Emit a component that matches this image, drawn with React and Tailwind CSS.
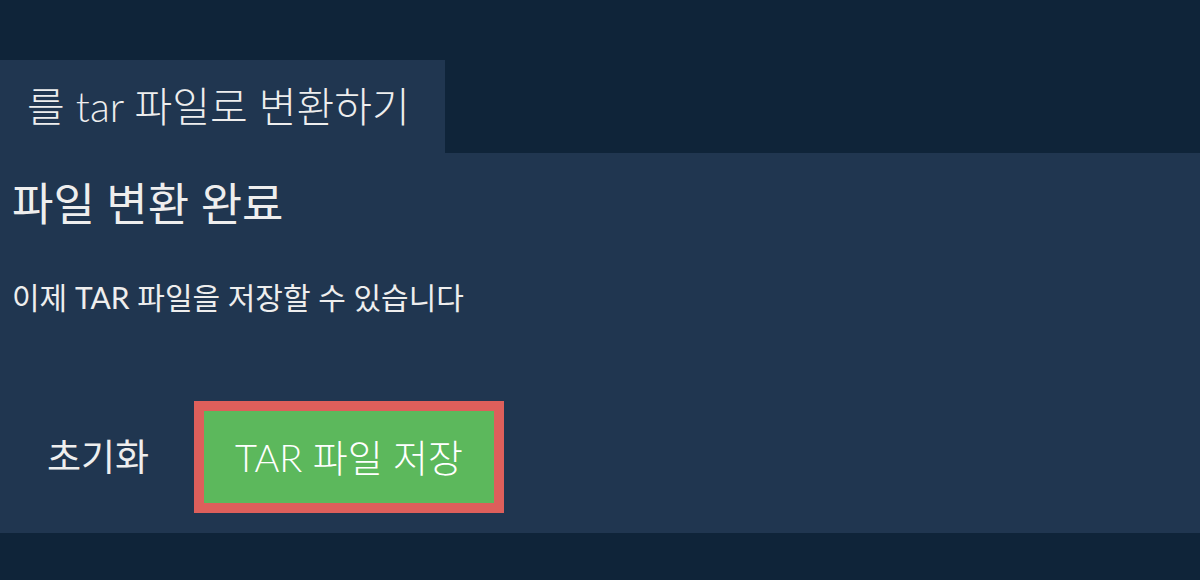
import React from 'react';

const font = { fontFamily: '"Lato", "Noto Sans CJK KR", sans-serif' };

export default function App() {
    return <div className="min-h-[580px] w-full bg-[#0f2439] pt-[60px] text-[#eeeeee]" style={font}>
        <div className="flex h-[93px] w-[445px] items-center bg-[#203650] pl-[27px]">
            <span className="text-[41px] font-light leading-[50px]">를 tar 파일로 변환하기</span>
        </div>
        <div className="h-[380px] bg-[#203650] px-3">
            <h2 className="pt-[23px] text-[45px] font-normal leading-[56px]">파일 변환 완료</h2>
            <p className="mt-[45px] text-[30px] leading-[40px]">이제 TAR 파일을 저장할 수 있습니다</p>
            <div className="mt-[84px] flex items-center">
                <button className="mr-[10px] w-[172px] text-[37px] leading-[48px] text-[#eeeeee]">초기화</button>
                <button className="h-[112px] w-[310px] border-[10px] border-[#dd5f5b] bg-[#5cb85c] text-[38px] font-light leading-[48px] text-white">
                    TAR 파일 저장
                </button>
            </div>
        </div>
    </div>;
}
